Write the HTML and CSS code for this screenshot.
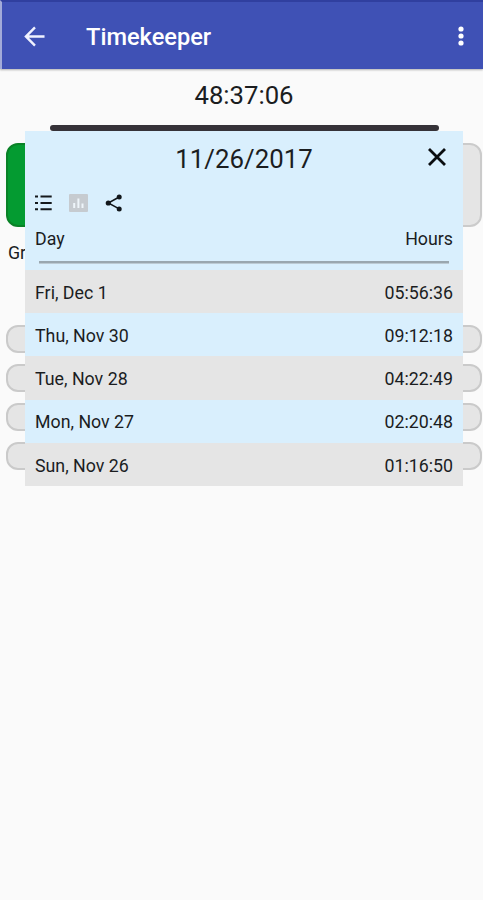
FILE: index.html
```html
<!DOCTYPE html>
<html lang="en">
<head>
<meta charset="utf-8">
<title>Timekeeper</title>
<link rel="stylesheet" href="styles.css">
</head>
<body>
<header class="bar">
  <svg class="back" viewBox="0 0 24 24"><path d="M20.3 11H7.4l5.7-5.8-1.4-1.4L3.5 12l8.2 8.2 1.4-1.4L7.4 13h12.9z"/></svg>
  <h1>Timekeeper</h1>
  <svg class="more" viewBox="0 0 8 22"><circle cx="4" cy="4" r="2.6"/><circle cx="4" cy="11" r="2.6"/><circle cx="4" cy="18" r="2.6"/></svg>
</header>
<main>
  <div class="total">48:37:06</div>
  <div class="rule"></div>
  <div class="actions"><div class="btn go"></div><div class="btn"></div></div>
  <div class="group">Gr</div>
  <div class="pills"><div class="pill"></div><div class="pill"></div><div class="pill"></div><div class="pill"></div></div>
</main>
<section class="dialog">
  <div class="head">
    <h2>11/26/2017</h2>
    <svg class="close" viewBox="0 0 20 20"><path d="M2 2L18 18M18 2L2 18"/></svg>
  </div>
  <div class="tools">
    <svg class="list" viewBox="0 0 18 16"><path d="M0 1.5h3M0 8h3M0 14.2h3M5.5 1.5h11.2M5.5 8h11.2M5.5 14.2h11.2"/></svg>
    <svg class="chart" viewBox="0 0 19 18"><rect width="19" height="18" rx="1"/><path d="M5.2 9v5M9.4 4.5V14M13.5 9.5V14"/></svg>
    <svg class="share" viewBox="0 0 18 18"><path d="M14.2 3L3.3 9l10.9 5.8"/><circle cx="14.2" cy="3" r="2.5"/><circle cx="3.3" cy="9" r="2.6"/><circle cx="14.2" cy="15" r="2.5"/></svg>
  </div>
  <div class="cols"><span>Day</span><span>Hours</span></div>
  <div class="line"></div>
  <div class="rows">
    <div class="row"><span>Fri, Dec 1</span><span>05:56:36</span></div>
    <div class="row"><span>Thu, Nov 30</span><span>09:12:18</span></div>
    <div class="row"><span>Tue, Nov 28</span><span>04:22:49</span></div>
    <div class="row"><span>Mon, Nov 27</span><span>02:20:48</span></div>
    <div class="row"><span>Sun, Nov 26</span><span>01:16:50</span></div>
  </div>
</section>
</body>
</html>
```
FILE: styles.css
```css
* { box-sizing: border-box; }
body {
  margin: 0;
  height: 900px;
  position: relative;
  overflow: hidden;
  background: #fafafa;
  color: #1b1d1f;
  font-family: Roboto, "Liberation Sans", sans-serif;
  font-size: 17.8px;
}
h1, h2 { margin: 0; }
svg { display: block; flex: none; }
.bar {
  display: flex;
  align-items: center;
  height: 69px;
  padding: 2px 18px 0 20px;
  background: #3f51b5;
  border-top: 2px solid #303f9f;
  border-left: 2px solid #a3abd9;
  box-shadow: 0 1px 2px rgba(0, 0, 0, .3);
}
.back { width: 29px; height: 29px; margin: -1px 0 0 -2px; fill: #f0f2ff; }
h1 { margin-left: 37px; font-size: 23.6px; font-weight: 500; color: #fff; line-height: 28px; }
.more { width: 8px; height: 22px; margin: -2px 0 0 auto; fill: #fff; }
.total { height: 56px; padding: 11px 0 0 5px; text-align: center; font-size: 25.7px; line-height: 31px; }
.rule { width: 389px; height: 6px; margin-left: 50px; border-radius: 3px; background: #353238; }
.actions { display: flex; justify-content: space-between; margin: 12px 1px 0 6px; }
.btn { width: 228px; height: 84px; border: 2px solid #cbcbcb; border-radius: 12px; background: #e5e5e5; }
.go { border-color: #0a8227; background: #049b31; }
.group { height: 98px; padding: 16px 8px 0; line-height: 20px; }
.pills { display: grid; gap: 10.7px; padding: 0 1px 0 6px; }
.pill { height: 28.3px; border: 2px solid #cacaca; border-radius: 12px; background: #e5e5e5; }
.dialog { position: absolute; left: 25px; top: 131px; width: 438px; background: #d9effd; }
.head { display: flex; align-items: center; height: 56px; padding-right: 16px; }
h2 { flex: 1; padding-left: 36px; text-align: center; font-size: 25.8px; font-weight: 400; line-height: 56px; }
.close { width: 20px; height: 20px; margin-top: -4px; fill: none; stroke: #0a0d10; stroke-width: 2.8; }
.tools { display: flex; align-items: center; height: 32px; padding-left: 10px; }
.list { width: 18px; height: 16px; fill: none; stroke: #15191c; stroke-width: 2; }
.chart { width: 19px; height: 18px; margin-left: 16px; fill: #c6cbd0; }
.chart path { stroke: #eef5fa; stroke-width: 2; }
.share { width: 18px; height: 18px; margin-left: 17px; fill: #11161a; }
.share path { fill: none; stroke: #11161a; stroke-width: 1.5; }
.cols { display: flex; justify-content: space-between; height: 41px; padding: 10px 10px 0; line-height: 20px; }
.line { height: 3px; margin: 1px 14px 6px; background: #9aa7af; border-bottom: 1px solid #bccad3; }
.row { display: flex; align-items: center; justify-content: space-between; height: 43.2px; padding: 1.6px 10px 0; }
.row:nth-child(odd) { background: #e5e5e5; }
```
